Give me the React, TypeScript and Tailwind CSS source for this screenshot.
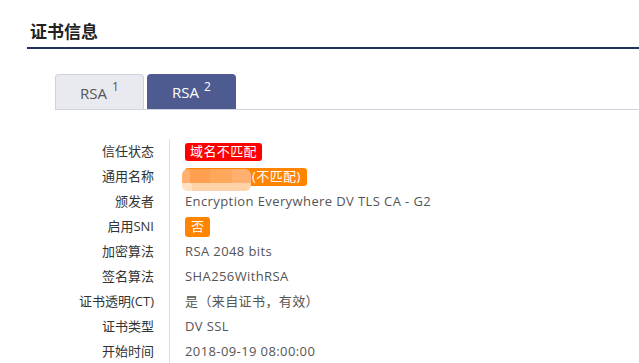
import React from "react";

const rows: { label: string; value: React.ReactNode }[] = [
  {
    label: "信任状态",
    value: (
      <span className="inline-flex h-[18px] items-center rounded-[3px] bg-[#ff0000] px-[5px] text-white">域名不匹配</span>
    ),
  },
  {
    label: "通用名称",
    value: (
      <span className="relative inline-flex h-[18px] items-center rounded-[3px] bg-[#ff8400] pl-[67px] pr-[6px] text-white">
        <span className="absolute left-[-3px] top-[1px] h-[22px] w-[69px] overflow-hidden rounded-[6px]">
          <span className="absolute left-0 top-0 h-[14px] w-[69px] bg-[#ffb070]" />
          <span className="absolute left-[8px] top-0 h-[14px] w-[20px] bg-[#ffa050]" />
          <span className="absolute left-[28px] top-0 h-[14px] w-[22px] bg-[#ffa85c]" />
          <span className="absolute left-0 top-[14px] h-[8px] w-[69px] bg-[#ffd3a8]" />
          <span className="absolute left-[0px] top-[14px] h-[8px] w-[10px] bg-[#ffe0c0]" />
        </span>
        (不匹配)
      </span>
    ),
  },
  { label: "颁发者", value: "Encryption Everywhere DV TLS CA - G2" },
  {
    label: "启用SNI",
    value: (
      <span className="inline-flex h-[20px] items-center rounded-[3px] bg-[#ff8400] px-[6px] text-white">否</span>
    ),
  },
  { label: "加密算法", value: "RSA 2048 bits" },
  { label: "签名算法", value: "SHA256WithRSA" },
  { label: "证书透明(CT)", value: "是（来自证书，有效）" },
  { label: "证书类型", value: "DV SSL" },
  { label: "开始时间", value: "2018-09-19 08:00:00" },
];

export default function App() {
  return (
    <div
      className="h-[363px] w-[639px] overflow-hidden bg-white text-[#555]"
      style={{ fontFamily: '"Open Sans", "Noto Sans CJK SC", sans-serif' }}
    >
      <div className="pl-[27px] pt-[20px]">
        <div className="border-b-[2px] border-[#1f2f5e] pb-[4px] pl-[3px]">
          <h1 className="text-[17px] font-bold leading-[23px] text-[#222]">证书信息</h1>
        </div>
        <div className="ml-[28px] mt-[25px] flex items-end gap-[3px] border-b border-[#d3d3e0]">
          <div className="flex h-[35px] w-[89px] items-center justify-center rounded-t-[4px] border border-b-0 border-[#cfd0dc] bg-[#e9eaf0] pt-[2px] text-[15px] text-[#555]">
            RSA<span className="ml-[5px] -translate-y-[6px] text-[12px]">1</span>
          </div>
          <div className="flex h-[35px] w-[89px] items-center justify-center rounded-t-[4px] bg-[#4e5b91] pt-[2px] text-[15px] text-white">
            RSA<span className="ml-[5px] -translate-y-[6px] text-[12px]">2</span>
          </div>
        </div>
        <div className="mt-[29px] flex text-[13px]">
          <div className="w-[143px] border-r border-[#dedede] pr-[15px] text-[#333]">
            {rows.map((r) => (
              <div key={r.label} className="flex h-[25px] items-center justify-end whitespace-nowrap">
                {r.label}
              </div>
            ))}
          </div>
          <div className="pl-[15px] tracking-[0.4px]">
            {rows.map((r) => (
              <div key={r.label} className="flex h-[25px] items-center whitespace-nowrap">
                {r.value}
              </div>
            ))}
          </div>
        </div>
      </div>
    </div>
  );
}
